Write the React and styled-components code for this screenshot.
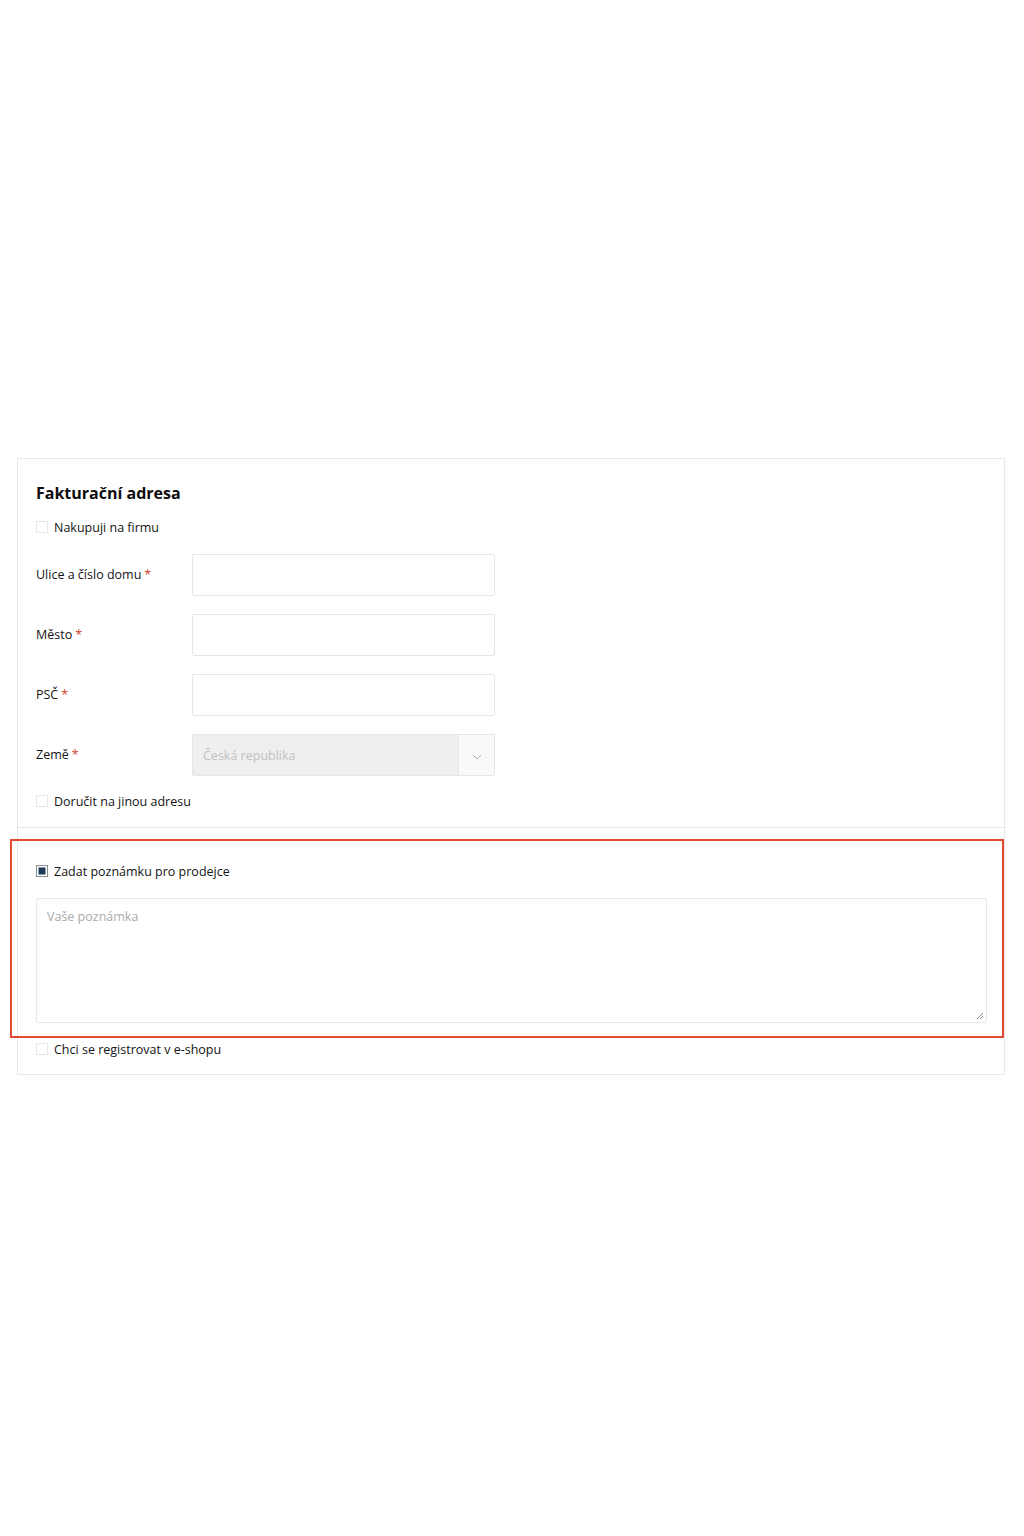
import React from 'react'
import styled, { createGlobalStyle } from 'styled-components'

const GlobalStyle = createGlobalStyle`
body {
  margin: 0;
  background: #ffffff;
  font-family: "Open Sans", "Liberation Sans", sans-serif;
  color: #141414;
}
* { box-sizing: border-box; }
`

const Page = styled.div`
padding: 458px 19px 461px 17px;
`
const Card = styled.div`
border: 1px solid #e8e8e8;
background: #ffffff;
`
const Section = styled.div`
position: relative;
display: flex;
flex-direction: column;
padding: ${p => p.$pad};
border-bottom: ${p => (p.$divider ? '1px solid #e8e8e8' : 'none')};
`
const Title = styled.h2`
margin: 0 0 13px 0;
font-size: 16px;
line-height: 22px;
font-weight: 700;
color: #0d0d0d;
`
const CheckRow = styled.label`
display: flex;
align-items: center;
gap: 6px;
height: 20px;
font-size: 12.5px;
color: #141414;
margin-top: ${p => p.$mt || 0}px;
`
const Box = styled.span`
width: 12px;
height: 12px;
border: 1px solid ${p => (p.$checked ? '#8a8f96' : '#e6e6e6')};
background: ${p => (p.$checked ? '#1f3a58' : '#fff')};
box-shadow: ${p => (p.$checked ? 'inset 0 0 0 1.5px #fff' : 'none')};
flex-shrink: 0;
`
const Fields = styled.div`
display: flex;
flex-direction: column;
gap: 18px;
margin-top: 17px;
margin-bottom: 15px;
`
const FieldRow = styled.div`
display: flex;
align-items: center;
`
const Label = styled.div`
width: 156px;
font-size: 12.5px;
color: #141414;
padding-bottom: 1px;
`
const Star = styled.span`
color: #d2432e;
margin-left: 3px;
`
const Input = styled.div`
width: 303px;
height: 42px;
border: 1px solid #e6e6e6;
border-radius: 2px;
background: #fff;
`
const Select = styled.div`
display: flex;
width: 303px;
height: 42px;
border: 1px solid #e6e6e6;
border-radius: 2px;
background: #efefef;
overflow: hidden;
`
const SelectValue = styled.div`
flex: 1;
display: flex;
align-items: center;
padding-left: 10px;
font-size: 12.5px;
color: #c2c2c2;
`
const SelectArrow = styled.div`
width: 36px;
display: flex;
align-items: center;
justify-content: center;
background: #f9f9f9;
border-left: 1px solid #e6e6e6;
padding-top: 3px;
`
const TextArea = styled.div`
position: relative;
margin: 17px 0 16px 0;
height: 125px;
border: 1px solid #e8e8e8;
border-radius: 2px;
padding: 9px 10px;
font-size: 12.5px;
color: #ababab;
`
const Grip = styled.svg`
position: absolute;
right: 2px;
bottom: 2px;
`
const Highlight = styled.div`
position: absolute;
left: -8px;
right: 0px;
top: 11px;
height: 199px;
border: 2px solid #e24a31;
pointer-events: none;
`

const Check = ({ checked, mt, children }) => (
  <CheckRow $mt={mt}>
    <Box $checked={checked} />
    {children}
  </CheckRow>
)

const fields = ['Ulice a číslo domu', 'Město', 'PSČ']

export default function App() {
  return (
    <Page>
      <GlobalStyle />
      <Card>
        <Section $divider $pad="23px 18px 16px 18px">
          <Title>Fakturační adresa</Title>
          <Check>Nakupuji na firmu</Check>
          <Fields>
            {fields.map(f => (
              <FieldRow key={f}>
                <Label>{f}<Star>*</Star></Label>
                <Input />
              </FieldRow>
            ))}
            <FieldRow>
              <Label>Země<Star>*</Star></Label>
              <Select>
                <SelectValue>Česká republika</SelectValue>
                <SelectArrow>
                  <svg width="10" height="6" viewBox="0 0 10 6">
                    <path d="M1 1l4 4 4-4" fill="none" stroke="#b0b0b0" strokeWidth="1" />
                  </svg>
                </SelectArrow>
              </Select>
            </FieldRow>
          </Fields>
          <Check>Doručit na jinou adresu</Check>
        </Section>
        <Section $pad="33px 17px 15px 18px">
          <Highlight />
          <Check checked>Zadat poznámku pro prodejce</Check>
          <TextArea>
            Vaše poznámka
            <Grip width="8" height="8" viewBox="0 0 8 8">
              <path d="M7 1L1 7M7 4L4 7" stroke="#8a8a8a" strokeWidth="1" />
            </Grip>
          </TextArea>
          <Check>Chci se registrovat v e-shopu</Check>
        </Section>
      </Card>
    </Page>
  )
}
